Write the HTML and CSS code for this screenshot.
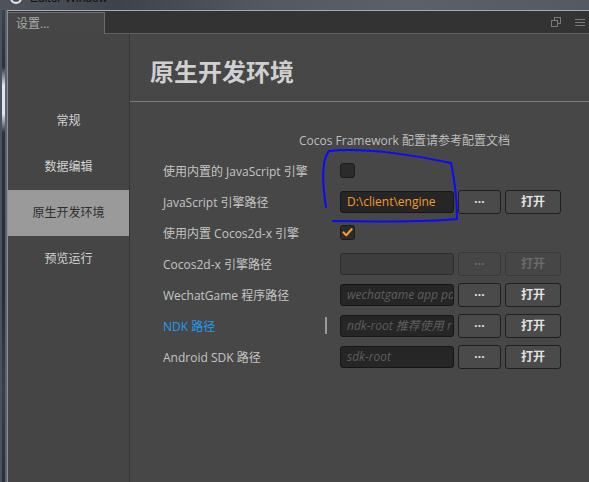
FILE: index.html
```html
<!DOCTYPE html>
<html lang="zh">
<head>
<meta charset="utf-8">
<title>设置</title>
<link rel="stylesheet" href="styles.css">
</head>
<body>
<div class="desk">
  <div class="os-title"><span class="os-icon"></span><span class="os-text">Editor Window</span></div>
  <div class="desk-row">
    <div class="frame-left"></div>
    <div class="window">
      <div class="tabbar">
        <div class="tab">设置...</div>
        <div class="tab-tools">
          <svg class="tool" width="10" height="10" viewBox="0 0 10 10"><rect x="3.5" y="0.5" width="6" height="6" fill="none" stroke="#7a7a7a"/><rect x="0.5" y="3.5" width="6" height="6" fill="#333" stroke="#7a7a7a"/></svg>
          <svg class="tool" width="10" height="9" viewBox="0 0 10 9"><path d="M0 1.5H10M0 4.5H10M0 7.5H10" stroke="#7a7a7a" stroke-width="1"/></svg>
        </div>
      </div>
      <div class="content">
        <nav class="sidebar">
          <div class="nav-item">常规</div>
          <div class="nav-item">数据编辑</div>
          <div class="nav-item active">原生开发环境</div>
          <div class="nav-item">预览运行</div>
        </nav>
        <main class="main">
          <h1 class="title">原生开发环境</h1>
          <div class="panel">
            <div class="intro">Cocos Framework 配置请参考配置文档</div>
            <div class="row">
              <div class="label">使用内置的 JavaScript 引擎</div>
              <div class="controls"><span class="checkbox"></span></div>
            </div>
            <div class="row">
              <div class="label">JavaScript 引擎路径</div>
              <div class="controls">
                <div class="input value">D:\client\engine</div>
                <div class="btn dots">···</div>
                <div class="btn open">打开</div>
              </div>
            </div>
            <div class="row">
              <div class="label">使用内置 Cocos2d-x 引擎</div>
              <div class="controls"><span class="checkbox checked"><svg width="15" height="15" viewBox="0 0 15 15"><path d="M3.5 7.5L6.3 10.2L11.6 4.2" fill="none" stroke="#f39a2e" stroke-width="2.2" stroke-linecap="round" stroke-linejoin="round"/></svg></span></div>
            </div>
            <div class="row">
              <div class="label">Cocos2d-x 引擎路径</div>
              <div class="controls">
                <div class="input disabled"></div>
                <div class="btn dots disabled">···</div>
                <div class="btn open disabled">打开</div>
              </div>
            </div>
            <div class="row">
              <div class="label">WechatGame 程序路径</div>
              <div class="controls">
                <div class="input placeholder">wechatgame app path</div>
                <div class="btn dots">···</div>
                <div class="btn open">打开</div>
              </div>
            </div>
            <div class="row">
              <div class="label link">NDK 路径<span class="grip"></span></div>
              <div class="controls">
                <div class="input placeholder">ndk-root 推荐使用 r10e</div>
                <div class="btn dots">···</div>
                <div class="btn open">打开</div>
              </div>
            </div>
            <div class="row">
              <div class="label">Android SDK 路径</div>
              <div class="controls">
                <div class="input placeholder">sdk-root</div>
                <div class="btn dots">···</div>
                <div class="btn open">打开</div>
              </div>
            </div>
          </div>
        </main>
      </div>
    </div>
  </div>
</div>
<svg class="annotation" width="589" height="482" viewBox="0 0 589 482">
  <path d="M326 207 C323 188 320 162 329 151 C365 147 420 156 451 163 C455 182 457 203 457 219 C420 223 370 221 333 221" fill="none" stroke="#0a0aff" stroke-width="2" stroke-linecap="round"/>
</svg>
</body>
</html>
```

FILE: styles.css
```css
* { box-sizing: border-box; }
html, body { margin: 0; padding: 0; }
body {
  width: 589px;
  height: 482px;
  overflow: hidden;
  position: relative;
  background: #2f363e;
  font-family: "Open Sans", "Noto Sans CJK SC", sans-serif;
  font-size: 12px;
}
.desk {
  display: flex;
  flex-direction: column;
  height: 482px;
}
.os-title {
  height: 10px;
  flex: none;
  background: linear-gradient(90deg, #4d545c 0%, #3c434b 20%, #525960 45%, #5b6168 70%, #545a61 100%);
  position: relative;
  overflow: hidden;
}
.os-icon {
  position: absolute;
  left: 10px;
  top: -8px;
  width: 12px;
  height: 12px;
  border-radius: 50%;
  border: 2px solid #e8e8e8;
}
.os-text {
  position: absolute;
  left: 30px;
  top: -9px;
  font-family: "Liberation Sans", sans-serif;
  font-size: 12px;
  color: #111;
}
.desk-row {
  flex: 1;
  display: flex;
  min-height: 0;
}
.frame-left {
  width: 7px;
  flex: none;
  background: linear-gradient(180deg, #3b434c 0%, #2b3239 12%, #dfe6ee 16%, #dfe6ee 22%, #2b3239 26%, #262c33 60%, #3a4048 80%, #2a3038 100%);
  border-left: 2px solid #4a525b;
  border-right: 2px solid #5a626b;
}
.window {
  flex: 1;
  display: flex;
  flex-direction: column;
  border-top: 1px solid #a6abb0;
  border-left: 1px solid #8b9096;
  background: #454545;
}
.tabbar {
  height: 23px;
  flex: none;
  display: flex;
  align-items: flex-end;
  background: #333333;
  border-bottom: 1px solid #5e5e5e;
}
.tab {
  width: 97px;
  height: 22px;
  margin-bottom: -1px;
  padding-left: 8px;
  line-height: 21px;
  color: #a9a9a9;
  background: #464646;
  border: 1px solid #6c6c6c;
  border-bottom: none;
  border-left: none;
}
.tab-tools {
  margin-left: auto;
  align-self: center;
  display: flex;
  align-items: center;
  gap: 14px;
  padding-right: 4px;
}
.tool { display: block; }
.content {
  flex: 1;
  display: flex;
  min-height: 0;
}
.sidebar {
  width: 122px;
  flex: none;
  background: #454545;
  border-right: 1px solid #363636;
  padding-top: 64px;
}
.nav-item {
  height: 46px;
  line-height: 46px;
  text-align: center;
  color: #d2d2d2;
}
.nav-item.active {
  background: #9a9a9a;
  color: #2e2e2e;
}
.main {
  flex: 1;
  background: #474747;
}
.title {
  margin: 0;
  padding: 23px 20px 14px;
  line-height: 30px;
  font-size: 24px;
  font-weight: bold;
  color: #d0d0d0;
  border-bottom: 1px solid #7a7a7a;
}
.panel {
  padding: 31px 0 0 33px;
}
.intro {
  line-height: 16px;
  margin-left: 136px;
  margin-bottom: 6px;
  color: #bdbdbd;
}
.row {
  height: 31px;
  display: flex;
  align-items: center;
}
.label {
  width: 177px;
  flex: none;
  display: flex;
  align-items: center;
  color: #c4c4c4;
}
.label.link { color: #1f9cf2; }
.grip {
  margin-left: auto;
  margin-right: 13px;
  width: 2px;
  height: 17px;
  background: #9a9a9a;
}
.controls {
  display: flex;
  align-items: center;
  gap: 4px;
}
.checkbox {
  width: 15px;
  height: 15px;
  border-radius: 3px;
  background: #2b2b2b;
  border: 1px solid #1c1c1c;
  display: flex;
  align-items: center;
  justify-content: center;
}
.checkbox svg { display: block; margin: -1px; }
.input {
  width: 114px;
  height: 22px;
  border-radius: 3px;
  background: #262626;
  border: 1px solid #161616;
  padding: 0 6px;
  line-height: 20px;
  white-space: nowrap;
  overflow: hidden;
}
.input.value { color: #f39a2e; }
.input.placeholder {
  color: #5e5e5e;
  font-style: italic;
}
.input.disabled {
  background: #3d3d3d;
  border-color: #2c2c2c;
}
.btn {
  height: 24px;
  border-radius: 3px;
  background: #4a4a4a;
  border: 1px solid #1f1f1f;
  color: #e2e2e2;
  text-align: center;
  line-height: 22px;
  font-weight: bold;
}
.btn.dots { width: 43px; }
.btn.open { width: 56px; }
.btn.disabled {
  background: #464646;
  border-color: #393939;
  color: #6b6b6b;
}
.annotation {
  position: absolute;
  left: 0;
  top: 0;
  pointer-events: none;
}
```
